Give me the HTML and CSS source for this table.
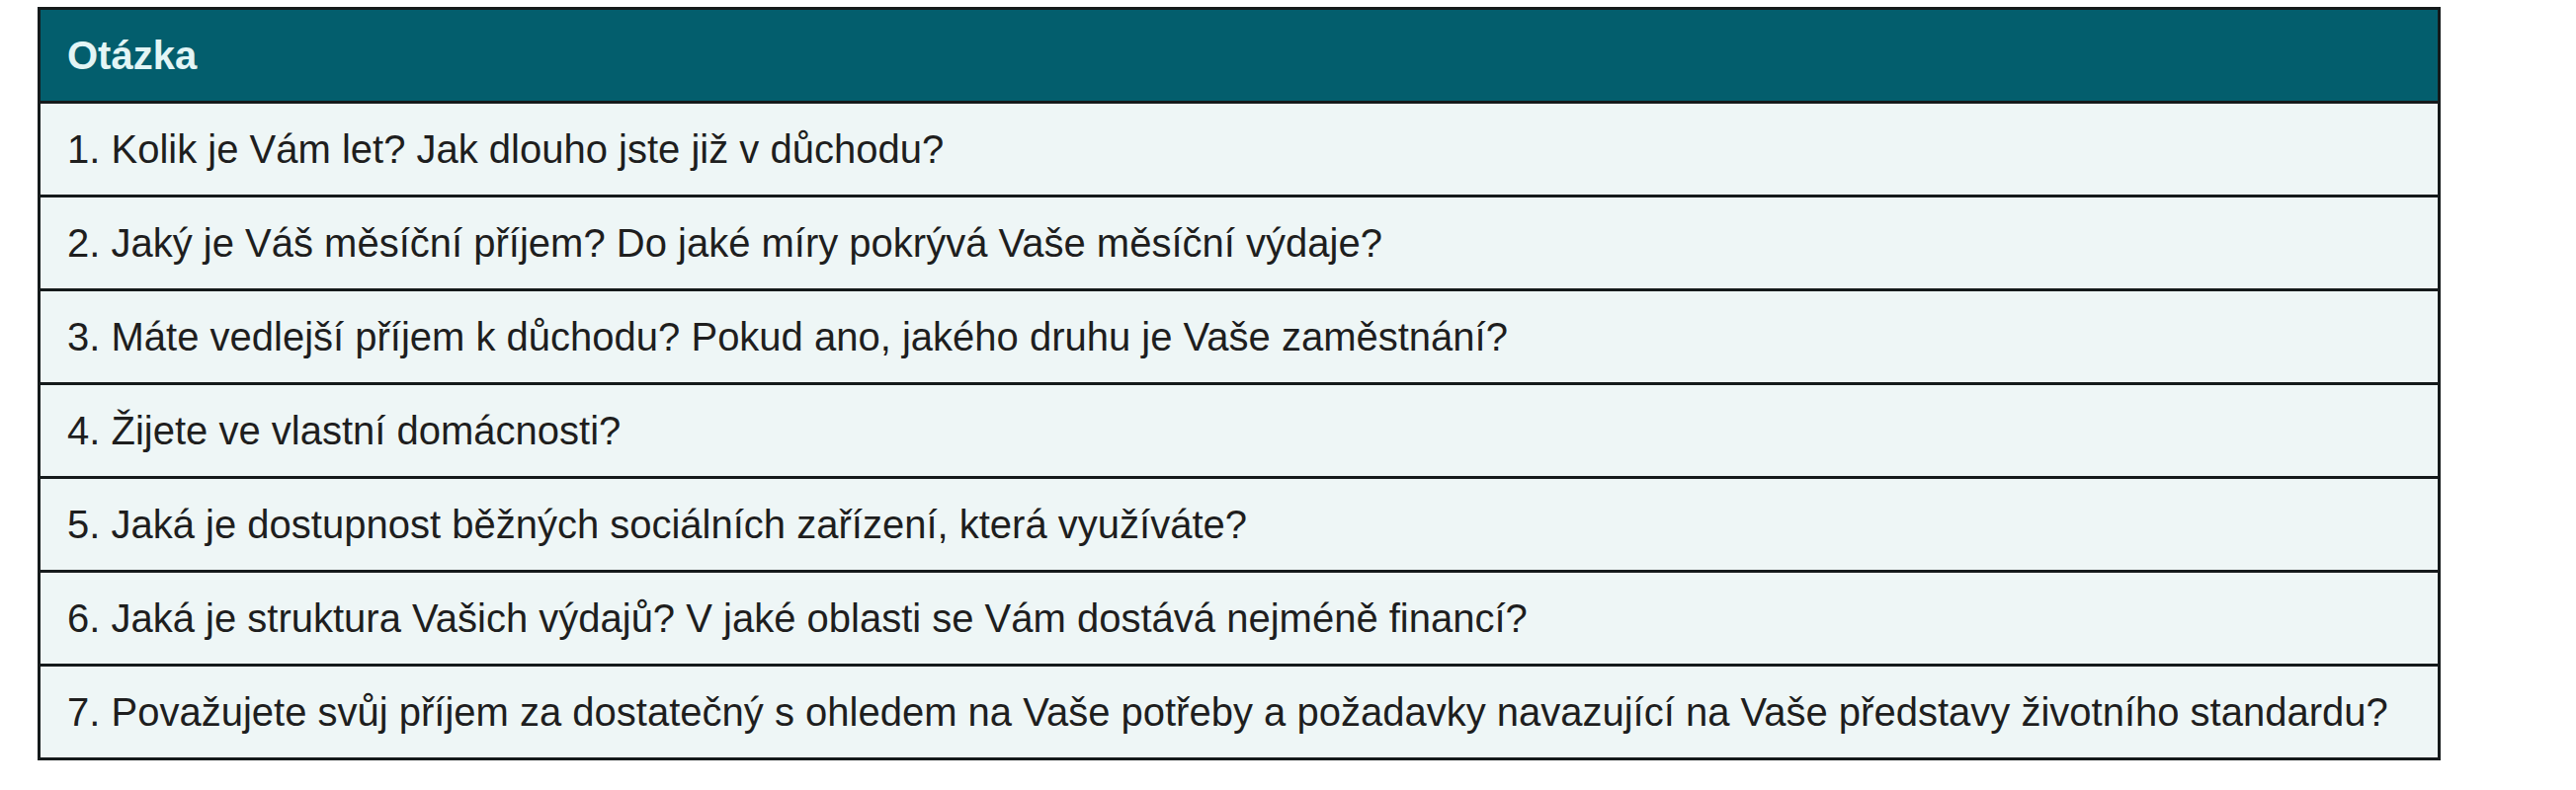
FILE: index.html
```html
<!DOCTYPE html>
<html lang="cs">
<head>
<meta charset="utf-8">
<title>Otázka</title>
<link rel="stylesheet" href="styles.css">
</head>
<body>
<table class="qtable">
  <thead>
    <tr><th>Otázka</th></tr>
  </thead>
  <tbody>
    <tr><td>1. Kolik je Vám let? Jak dlouho jste již v důchodu?</td></tr>
    <tr><td>2. Jaký je Váš měsíční příjem? Do jaké míry pokrývá Vaše měsíční výdaje?</td></tr>
    <tr><td>3. Máte vedlejší příjem k důchodu? Pokud ano, jakého druhu je Vaše zaměstnání?</td></tr>
    <tr><td>4. Žijete ve vlastní domácnosti?</td></tr>
    <tr><td>5. Jaká je dostupnost běžných sociálních zařízení, která využíváte?</td></tr>
    <tr><td>6. Jaká je struktura Vašich výdajů? V jaké oblasti se Vám dostává nejméně financí?</td></tr>
    <tr><td>7. Považujete svůj příjem za dostatečný s ohledem na Vaše potřeby a požadavky navazující na Vaše představy životního standardu?</td></tr>
  </tbody>
</table>
</body>
</html>
```

FILE: styles.css
```css
html, body {
  margin: 0;
  padding: 0;
  background: #ffffff;
}

.qtable {
  margin: 7px 0 0 38px;
  width: 2432px;
  border-collapse: collapse;
  font-family: "Liberation Sans", Arial, sans-serif;
  font-size: 40px;
  color: #1e1e1e;
}

.qtable th,
.qtable td {
  border: 3px solid #151a1b;
  height: 95px;
  padding: 0 0 0 27px;
  text-align: left;
  vertical-align: middle;
  box-sizing: border-box;
}

.qtable th {
  background: #035e6d;
  color: #e3f5f5;
  font-weight: bold;
}

.qtable td {
  background: #eef6f6;
  font-weight: normal;
}
```
